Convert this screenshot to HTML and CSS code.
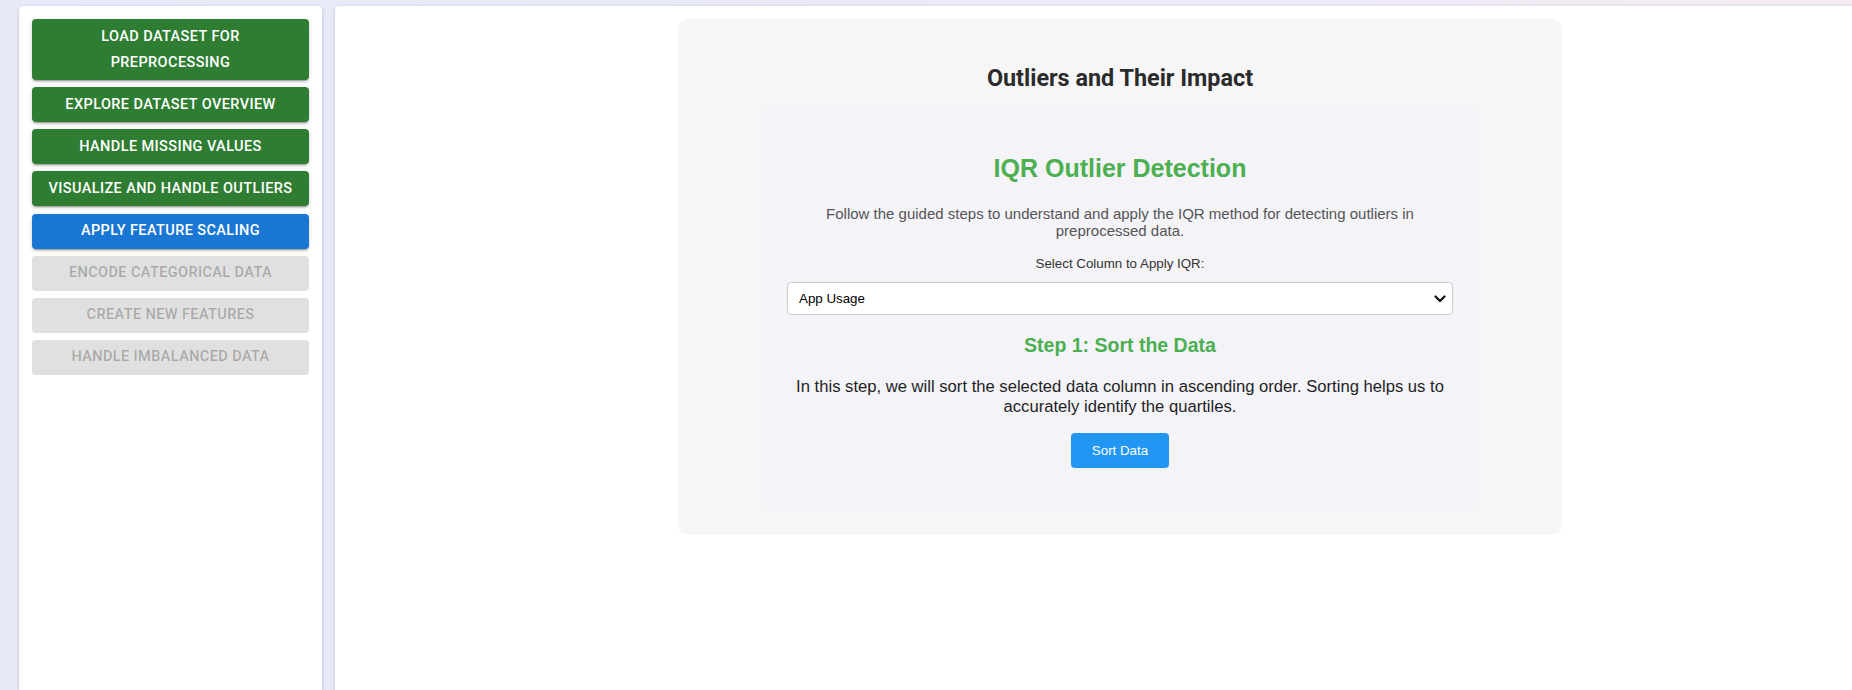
FILE: index.html
```html
<!DOCTYPE html>
<html lang="en">
<head>
<meta charset="utf-8">
<title>Outliers and Their Impact</title>
<link rel="stylesheet" href="styles.css">
</head>
<body>
<div class="app">
  <aside class="sidebar">
    <button class="nav-btn done">Load Dataset for Preprocessing</button>
    <button class="nav-btn done">Explore Dataset Overview</button>
    <button class="nav-btn done">Handle Missing Values</button>
    <button class="nav-btn done">Visualize and Handle Outliers</button>
    <button class="nav-btn current">Apply Feature Scaling</button>
    <button class="nav-btn locked" disabled>Encode Categorical Data</button>
    <button class="nav-btn locked" disabled>Create New Features</button>
    <button class="nav-btn locked" disabled>Handle Imbalanced Data</button>
  </aside>
  <main class="main">
    <section class="card">
      <h2 class="card-title">Outliers and Their Impact</h2>
      <div class="iqr-box">
        <h2 class="iqr-title">IQR Outlier Detection</h2>
        <p class="iqr-desc">Follow the guided steps to understand and apply the IQR method for detecting outliers in preprocessed data.</p>
        <label class="iqr-label" for="col">Select Column to Apply IQR:</label>
        <div class="select-wrap">
          <select id="col" class="iqr-select">
            <option>App Usage</option>
            <option>Screen Time</option>
            <option>Battery Drain</option>
          </select>
          <svg class="select-arrow" width="12" height="8" viewBox="0 0 12 8" aria-hidden="true">
            <path d="M1.5 1.5 L6 6 L10.5 1.5" fill="none" stroke="#111" stroke-width="2.2" stroke-linecap="round" stroke-linejoin="round"/>
          </svg>
        </div>
        <h3 class="step-title">Step 1: Sort the Data</h3>
        <p class="step-text">In this step, we will sort the selected data column in ascending order. Sorting helps us to accurately identify the quartiles.</p>
        <button class="step-btn">Sort Data</button>
      </div>
    </section>
  </main>
</div>
</body>
</html>
```

FILE: styles.css
```css
html, body {
  margin: 0;
  padding: 0;
  height: 100%;
  overflow: hidden;
}

body {
  background: linear-gradient(90deg, #e6eaf8 0%, #ebebf7 50%, #f4eaf5 100%);
  font-family: "Liberation Sans", Arial, sans-serif;
}

.app {
  display: flex;
  align-items: stretch;
  gap: 13px;
  padding: 6px 0 0 19px;
  height: 100%;
  box-sizing: border-box;
}

.sidebar {
  flex: 0 0 303px;
  box-sizing: border-box;
  background: #ffffff;
  border-radius: 4px 4px 0 0;
  box-shadow: 0 2px 4px rgba(60, 60, 110, 0.18), 0 0 2px rgba(60, 60, 110, 0.12);
  padding: 13px 13px;
  display: flex;
  flex-direction: column;
  gap: 7.15px;
}

.nav-btn {
  display: block;
  width: 100%;
  border: none;
  border-radius: 4px;
  padding: 4.5px 16px;
  font-family: Roboto, "Liberation Sans", sans-serif;
  font-weight: 500;
  font-size: 14.5px;
  line-height: 26px;
  letter-spacing: 0.4px;
  text-transform: uppercase;
  text-align: center;
  cursor: pointer;
}

.nav-btn.done {
  background: #2e7d32;
  color: #ffffff;
  box-shadow: 0 3px 1px -2px rgba(0,0,0,0.2), 0 2px 2px 0 rgba(0,0,0,0.14), 0 1px 5px 0 rgba(0,0,0,0.12);
}

.nav-btn.current {
  background: #1976d2;
  color: #ffffff;
  box-shadow: 0 3px 1px -2px rgba(0,0,0,0.2), 0 2px 2px 0 rgba(0,0,0,0.14), 0 1px 5px 0 rgba(0,0,0,0.12);
}

.nav-btn.locked {
  background: #e0e0e0;
  color: rgba(0, 0, 0, 0.26);
  cursor: default;
}

.main {
  flex: 1 1 auto;
  margin-right: -20px;
  background: #ffffff;
  border-radius: 4px 0 0 0;
  box-shadow: 0 2px 4px rgba(60, 60, 110, 0.18), 0 0 2px rgba(60, 60, 110, 0.12);
  padding: 13px 0 0 343px;
}

.card {
  width: 884px;
  box-sizing: border-box;
  background: #f6f6f7;
  border-radius: 10px;
  padding: 20px 83px 25px;
}

.card-title {
  margin: 25px 0 15px;
  font-family: Roboto, "Liberation Sans", sans-serif;
  font-weight: 700;
  font-size: 23.4px;
  line-height: 28px;
  color: #2b2b2b;
  text-align: center;
}

.iqr-box {
  background: #f3f3f8;
  border-radius: 10px;
  padding: 20px 26px 20px;
  display: flex;
  flex-direction: column;
  align-items: center;
  text-align: center;
}

.iqr-title {
  margin: 27px 0 22px;
  font-size: 25px;
  line-height: 29px;
  font-weight: 700;
  color: #4caf50;
}

.iqr-desc {
  margin: 0 0 16px;
  font-size: 15px;
  line-height: 17.25px;
  color: #555555;
}

.iqr-label {
  display: block;
  margin: 0 0 11px;
  font-size: 13.33px;
  line-height: 15.5px;
  color: #333333;
}

.select-wrap {
  position: relative;
  width: 100%;
}

.iqr-select {
  display: block;
  width: 100%;
  height: 33px;
  box-sizing: border-box;
  border: 1px solid #cccccc;
  border-radius: 4px;
  background: #ffffff;
  padding: 0 30px 0 11px;
  font-family: "Liberation Sans", Arial, sans-serif;
  font-size: 13.33px;
  color: #000000;
  -webkit-appearance: none;
  appearance: none;
}

.select-arrow {
  position: absolute;
  right: 7px;
  top: 13px;
  pointer-events: none;
}

.step-title {
  margin: 19px 0 20px;
  font-size: 19.5px;
  line-height: 22.5px;
  font-weight: 700;
  color: #4caf50;
}

.step-text {
  margin: 0 0 16px;
  font-size: 16.64px;
  line-height: 20px;
  color: #1f1f1f;
}

.step-btn {
  border: none;
  border-radius: 4px;
  background: #2196f3;
  color: #ffffff;
  font-family: "Liberation Sans", Arial, sans-serif;
  font-size: 13.33px;
  line-height: 15px;
  padding: 10px 21px;
  margin-bottom: 22px;
  cursor: pointer;
}
```
